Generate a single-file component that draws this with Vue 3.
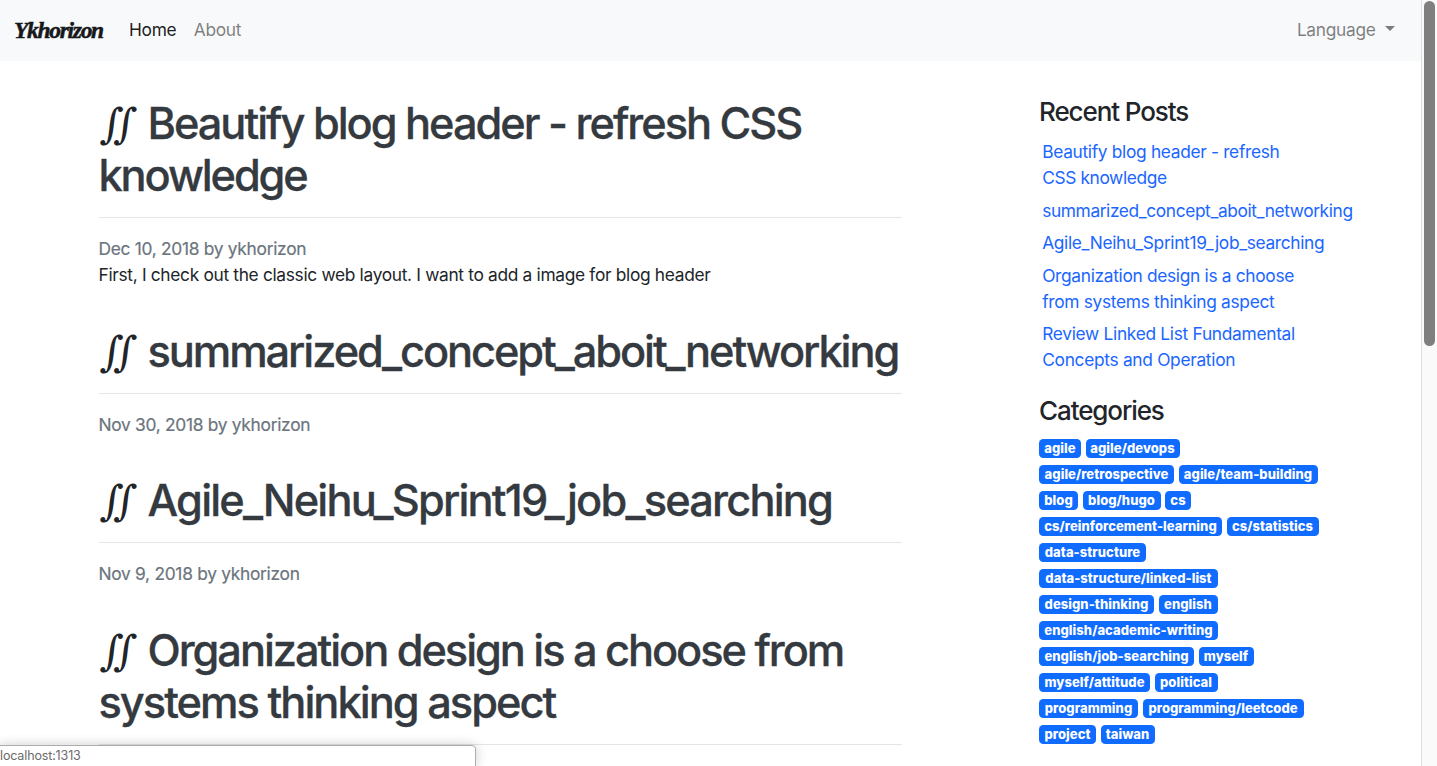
<script setup>
const posts = [
  { lines: [['Beautify blog header - refresh CSS', -2.02], ['knowledge', -2.1]], date: 'Dec 10, 2018', summary: 'First, I check out the classic web layout. I want to add a image for blog header' },
  { lines: [['summarized_concept_aboit_networking', -2.07]], date: 'Nov 30, 2018' },
  { lines: [['Agile_Neihu_Sprint19_job_searching', -1.8]], date: 'Nov 9, 2018' },
  { lines: [['Organization design is a choose from', -2.05], ['systems thinking aspect', -1.97]] },
]
const recent = [
  [['Beautify blog header - refresh', -0.32], ['CSS knowledge', -0.38]],
  [['summarized_concept_aboit_networking', -0.39]],
  [['Agile_Neihu_Sprint19_job_searching', -0.34]],
  [['Organization design is a choose', -0.32], ['from systems thinking aspect', -0.31]],
  [['Review Linked List Fundamental', -0.3], ['Concepts and Operation', -0.3]],
]
// Each row lists [label, badge width].
const categoryRows = [
  [['agile', 42], ['agile/devops', 94]],
  [['agile/retrospective', 135], ['agile/team-building', 139]],
  [['blog', 39], ['blog/hugo', 78], ['cs', 26]],
  [['cs/reinforcement-learning', 183], ['cs/statistics', 92]],
  [['data-structure', 107]],
  [['data-structure/linked-list', 179]],
  [['design-thinking', 115], ['english', 59]],
  [['english/academic-writing', 179]],
  [['english/job-searching', 155], ['myself', 55]],
  [['myself/attitude', 111], ['political', 63]],
  [['programming', 99], ['programming/leetcode', 161]],
  [['project', 57], ['taiwan', 54]],
]
</script>

<template>
  <div class="page">
    <div class="viewport">
      <nav class="navbar">
        <a class="brand">Ykhorizon</a>
        <a class="nav-link active">Home</a>
        <a class="nav-link about">About</a>
        <a class="nav-link language">Language<i class="caret"></i></a>
      </nav>
      <div class="content">
        <main class="posts">
          <article v-for="(p, n) in posts" :key="n" class="post">
            <h1>
              <span v-for="([text, spacing], i) in p.lines" :key="text" class="title-line">
                <span v-if="i === 0" class="mark">∬</span><a :style="{ letterSpacing: spacing + 'px' }">{{ text }}</a>
              </span>
            </h1>
            <hr />
            <div v-if="p.date" class="meta">{{ p.date }} by ykhorizon</div>
            <div v-if="p.summary" class="summary">{{ p.summary }}</div>
          </article>
        </main>
        <aside class="sidebar">
          <h4>Recent Posts</h4>
          <ul>
            <li v-for="(r, i) in recent" :key="i">
              <a v-for="[text, spacing] in r" :key="text" :style="{ letterSpacing: spacing + 'px' }">{{ text }}</a>
            </li>
          </ul>
          <h4>Categories</h4>
          <div v-for="(row, i) in categoryRows" :key="i" class="badge-row">
            <a v-for="[name, w] in row" :key="name" class="badge" :style="{ width: w + 'px' }">{{ name }}</a>
          </div>
        </aside>
      </div>
    </div>
    <div class="scrollbar"><div class="thumb"></div></div>
    <div class="status">localhost:1313</div>
  </div>
</template>

<style>
body { margin: 0; overflow: hidden; }
</style>

<style scoped>
.page {
  position: relative;
  display: flex;
  width: 100vw;
  height: 766px;
  overflow: hidden;
  background: #fff;
  color: #212529;
  font-family: Inter, 'Liberation Sans', sans-serif;
  font-size: 17.33px;
  line-height: 26px;
  letter-spacing: -0.31px;
}
.viewport { flex: 1; min-width: 0; overflow: hidden; }
.navbar {
  box-sizing: border-box;
  display: flex;
  align-items: center;
  height: 61px;
  padding: 0 26.5px 2px 14px;
  background: #f8f9fa;
}
.brand {
  width: 115px;
  color: #16181b;
  font: italic bold 23.5px/28px 'Liberation Serif', serif;
  letter-spacing: -1.3px;
  -webkit-text-stroke: 0.5px currentColor;
}
.nav-link { color: rgba(0, 0, 0, 0.5); white-space: nowrap; }
.nav-link.active { color: rgba(0, 0, 0, 0.9); }
.about { margin-left: 17.5px; }
.language { display: flex; align-items: center; margin-left: auto; }
.caret {
  margin: -3px 0 0 9px;
  border: 5.2px solid transparent;
  border-top-color: currentColor;
  border-bottom: 0;
}
.content { display: flex; padding-top: 36px; }
.posts { width: 803px; margin-left: 98.5px; }
.post { margin-bottom: 36.3px; }
h1, h4 { margin: 0; font-weight: 500; }
h1 { font-size: 43.33px; line-height: 52px; color: #343a40; }
.title-line { display: flex; height: 52px; white-space: nowrap; }
.title-line a { -webkit-text-stroke: 0.3px currentColor; }
.mark {
  flex: none;
  box-sizing: border-box;
  width: 49px;
  padding-left: 2px;
  color: #212529;
  font-family: 'DejaVu Serif', serif;
  font-size: 41.5px;
  font-weight: 400;
  letter-spacing: 0;
  transform: translateY(1px) skewX(-5deg);
}
hr { height: 1px; margin: 16.3px 0 18px; border: 0; background: rgba(0, 0, 0, 0.1); }
.meta { color: #6c757d; letter-spacing: -0.28px; -webkit-text-stroke: 0.2px currentColor; }
.summary { letter-spacing: -0.32px; white-space: nowrap; }
.sidebar { width: 320px; margin-left: 137.5px; white-space: nowrap; }
h4 { font-size: 26px; line-height: 31px; letter-spacing: -1.1px; }
.sidebar h4:first-child { margin-top: -1px; }
ul { margin: 8.7px 0 18px; padding: 0 0 0 3.2px; list-style: none; }
li { padding: 3.3px 0; }
li a { display: block; color: #1a66ff; }
.badge-row { display: flex; align-items: center; gap: 4.5px; height: 26px; }
h4 + .badge-row { margin-top: 10.3px; }
.badge {
  box-sizing: border-box;
  height: 19px;
  border-radius: 4.3px;
  background: #106bff;
  color: #fff;
  font-size: 13px;
  font-weight: 800;
  line-height: 19px;
  letter-spacing: 0.05px;
  text-align: center;
}
.scrollbar {
  box-sizing: border-box;
  width: 16px;
  padding: 1px 2px;
  border-left: 1px solid #dedede;
  background: #fafafa;
}
.thumb { width: 11px; height: 345px; border-radius: 6px; background: #7f7f7f; }
.status {
  position: absolute;
  left: -1px;
  bottom: -1px;
  box-sizing: border-box;
  width: 477px;
  height: 22px;
  border: 1px solid #adadad;
  border-top-right-radius: 4px;
  background: #fff;
  box-shadow: 0 0 12px rgba(0, 0, 0, 0.2);
  color: #6b6b6b;
  font-size: 12.5px;
  line-height: 20px;
  letter-spacing: -0.14px;
}
</style>
